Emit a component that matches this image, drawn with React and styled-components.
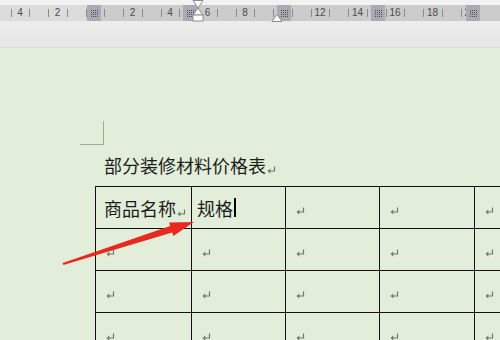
import React from "react";
import styled, { createGlobalStyle } from "styled-components";

const GlobalStyle = createGlobalStyle`
  html, body {
    margin: 0;
    padding: 0;
    width: 500px;
    height: 340px;
    overflow: hidden;
    background: #e2eed9;
  }
`;

const ZERO = 95;
const UNIT = 18.75;
const COLUMNS = [95, 191, 285, 379, 474];
const NUMBERS = [-4, -2, 0, 2, 4, 6, 8, 10, 12, 14, 16, 18, 20];

const Window = styled.div`
  width: 500px;
  height: 340px;
  display: flex;
  flex-direction: column;
  overflow: hidden;
  font-family: "Noto Sans CJK SC", "Noto Sans", sans-serif;
`;

const TopStrip = styled.div`
  flex: none;
  height: 5px;
  background: #f2f2f2;
`;

const Ruler = styled.div`
  flex: none;
  position: relative;
  height: 16px;
  background: linear-gradient(to right, #dcdcdc 0 88px, #cbcbcb 88px);
  font-family: "Liberation Sans", Arial, sans-serif;
`;

const Tick = styled.span`
  position: absolute;
  top: 4px;
  width: 1px;
  height: 8px;
  background: #8a8a8a;
`;

const Num = styled.span`
  position: absolute;
  top: 1px;
  width: 16px;
  margin-left: -8px;
  text-align: center;
  font-size: 10px;
  line-height: 14px;
  color: #4a4a4a;
`;

const ColMarker = styled.span`
  position: absolute;
  top: 0;
  width: 14px;
  height: 16px;
  background: #aaaab2;
  display: flex;
  align-items: center;
  justify-content: center;
`;

const Dots = styled.span`
  width: 8px;
  height: 8px;
  background: conic-gradient(from 90deg, #4a4a52 25%, transparent 0) 0 0 / 2px 2px;
`;

const Indent = styled.svg`
  position: absolute;
  overflow: visible;
`;

const Gap = styled.div`
  flex: none;
  height: 26px;
  background: linear-gradient(#ececec, #e6e6e6);
  border-bottom: 1px solid #dadada;
`;

const Page = styled.div`
  flex: 1;
  min-height: 0;
  position: relative;
  background: #e2eed9;
  display: flex;
  flex-direction: column;
`;

const CornerMark = styled.div`
  flex: none;
  margin: 73px 0 0 80px;
  width: 23px;
  height: 23px;
  border-right: 1px solid #a3a89e;
  border-bottom: 1px solid #a3a89e;
`;

const Title = styled.div`
  flex: none;
  margin: 9px 0 0 104px;
  font-size: 18px;
  line-height: 22px;
  color: #1c1c1c;
  display: flex;
  align-items: center;
`;

const Table = styled.div`
  flex: none;
  margin: 10px 0 0 95px;
  display: grid;
  grid-template-columns: 96px 94px 94px 95px 60px;
  grid-auto-rows: 42px;
  border-left: 1px solid #111;
  border-top: 1px solid #111;
  width: max-content;
`;

const Cell = styled.div`
  box-sizing: border-box;
  border-right: 1px solid #111;
  border-bottom: 1px solid #111;
  display: flex;
  align-items: center;
  padding-left: ${(p) => p.$pad || 9}px;
  font-size: 18px;
  color: #1c1c1c;
  white-space: nowrap;
`;

const Caret = styled.span`
  display: inline-block;
  width: 2px;
  height: 19px;
  background: #000;
  margin-left: 1px;
`;

const MarkSvg = styled.svg`
  flex: none;
  margin-top: ${(p) => p.$drop || 6}px;
  margin-left: ${(p) => p.$left || 0}px;
`;

const ArrowLayer = styled.svg`
  position: absolute;
  left: 0;
  top: -48px;
  width: 500px;
  height: 340px;
  pointer-events: none;
`;

const ReturnMark = ({ drop, left }) => (
  <MarkSvg width="9" height="8" viewBox="0 0 9 8" $drop={drop} $left={left}>
    <path d="M7.5 0.5 V5 H2" fill="none" stroke="#6f7a66" strokeWidth="1.2" />
    <path d="M0.5 5 L3.3 2.5 L3.3 7.5 Z" fill="#6f7a66" />
  </MarkSvg>
);

const RulerMarks = () => (
  <>
    {NUMBERS.map((n) => {
      const x = ZERO + n * UNIT;
      return (
        <React.Fragment key={n}>
          <Tick style={{ left: x - UNIT / 2 }} />
          <Tick style={{ left: x + UNIT / 2 }} />
          {n !== 0 && <Num style={{ left: x }}>{Math.abs(n)}</Num>}
        </React.Fragment>
      );
    })}
    {COLUMNS.map((c) => (
      <ColMarker key={c} style={{ left: c - 8 }}>
        <Dots />
      </ColMarker>
    ))}
    <Indent width="12" height="22" style={{ left: 192, top: -5 }} viewBox="0 0 12 22">
      <path d="M1 0.5 H11 L6 8 Z" fill="#fff" stroke="#8c8c8c" />
      <path d="M6 8 L11 15 H1 Z" fill="#fff" stroke="#8c8c8c" />
      <rect x="1" y="15" width="10" height="6" fill="#fff" stroke="#8c8c8c" />
    </Indent>
    <Indent width="12" height="8" style={{ left: 271, top: 9 }} viewBox="0 0 12 8">
      <path d="M6 0.5 L11 7.5 H1 Z" fill="#fff" stroke="#8c8c8c" />
    </Indent>
  </>
);

const rows = [
  [
    <>
      商品名称
      <ReturnMark drop={10} left={1} />
    </>,
    <>
      规格
      <Caret />
    </>,
    null,
    null,
    null,
  ],
  [null, null, null, null, null],
  [null, null, null, null, null],
  [null, null, null, null, null],
];

export default function App() {
  return (
    <Window>
      <GlobalStyle />
      <TopStrip />
      <Ruler>
        <RulerMarks />
      </Ruler>
      <Gap />
      <Page>
        <CornerMark />
        <Title>
          部分装修材料价格表
          <ReturnMark drop={9} left={1} />
        </Title>
        <Table>
          {rows.map((row, r) =>
            row.map((content, c) => (
              <Cell key={`${r}-${c}`} $pad={content ? (c === 0 ? 8 : 5) : 10}>
                {content || <ReturnMark />}
              </Cell>
            ))
          )}
        </Table>
        <ArrowLayer viewBox="0 0 500 340">
          <polygon
            points="62.7,263 170.1,226 169,222.6 194,222 173.3,236 172.2,232.6 63.3,265"
            fill="#e62a1f"
          />
        </ArrowLayer>
      </Page>
    </Window>
  );
}
